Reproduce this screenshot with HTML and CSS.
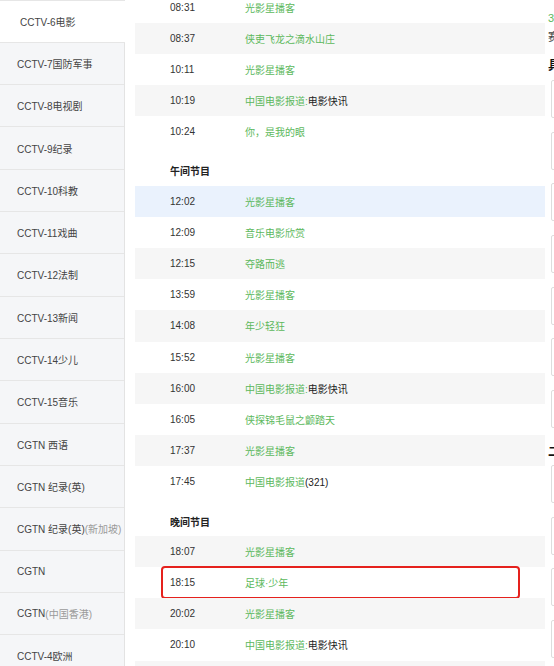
FILE: index.html
```html
<!DOCTYPE html>
<html lang="zh-CN">
<head>
<meta charset="utf-8">
<title>节目单</title>
<link rel="stylesheet" href="styles.css">
</head>
<body>
<div class="page">
  <ul class="channels">
    <li class="ch active">CCTV-6电影</li>
    <li class="ch">CCTV-7国防军事</li>
    <li class="ch">CCTV-8电视剧</li>
    <li class="ch">CCTV-9纪录</li>
    <li class="ch">CCTV-10科教</li>
    <li class="ch">CCTV-11戏曲</li>
    <li class="ch">CCTV-12法制</li>
    <li class="ch">CCTV-13新闻</li>
    <li class="ch">CCTV-14少儿</li>
    <li class="ch">CCTV-15音乐</li>
    <li class="ch">CGTN 西语</li>
    <li class="ch">CGTN 纪录(英)</li>
    <li class="ch">CGTN 纪录(英)<span class="sub">(新加坡)</span></li>
    <li class="ch">CGTN</li>
    <li class="ch">CGTN<span class="sub">(中国香港)</span></li>
    <li class="ch">CCTV-4欧洲</li>
  </ul>

  <div class="schedule">
    <div class="row"><span class="time">08:31</span><span class="title"><a>光影星播客</a></span></div>
    <div class="row alt"><span class="time">08:37</span><span class="title"><a>侠吏飞龙之滴水山庄</a></span></div>
    <div class="row"><span class="time">10:11</span><span class="title"><a>光影星播客</a></span></div>
    <div class="row alt"><span class="time">10:19</span><span class="title"><a>中国电影报道:</a>电影快讯</span></div>
    <div class="row"><span class="time">10:24</span><span class="title"><a>你，是我的眼</a></span></div>

    <div class="section">午间节目</div>
    <div class="row hover"><span class="time">12:02</span><span class="title"><a>光影星播客</a></span></div>
    <div class="row"><span class="time">12:09</span><span class="title"><a>音乐电影欣赏</a></span></div>
    <div class="row alt"><span class="time">12:15</span><span class="title"><a>夺路而逃</a></span></div>
    <div class="row"><span class="time">13:59</span><span class="title"><a>光影星播客</a></span></div>
    <div class="row alt"><span class="time">14:08</span><span class="title"><a>年少轻狂</a></span></div>
    <div class="row"><span class="time">15:52</span><span class="title"><a>光影星播客</a></span></div>
    <div class="row alt"><span class="time">16:00</span><span class="title"><a>中国电影报道:</a>电影快讯</span></div>
    <div class="row"><span class="time">16:05</span><span class="title"><a>侠探锦毛鼠之颤踏天</a></span></div>
    <div class="row alt"><span class="time">17:37</span><span class="title"><a>光影星播客</a></span></div>
    <div class="row"><span class="time">17:45</span><span class="title"><a>中国电影报道</a>(321)</span></div>

    <div class="section">晚间节目</div>
    <div class="row alt"><span class="time">18:07</span><span class="title"><a>光影星播客</a></span></div>
    <div class="row marked"><span class="time">18:15</span><span class="title"><a>足球·少年</a></span><span class="mark"></span></div>
    <div class="row alt"><span class="time">20:02</span><span class="title"><a>光影星播客</a></span></div>
    <div class="row"><span class="time">20:10</span><span class="title"><a>中国电影报道:</a>电影快讯</span></div>
    <div class="row alt"></div>
  </div>

  <div class="side">
    <div class="side-date">3月</div>
    <div class="side-note">赛事</div>
    <div class="side-head">具体</div>
    <div class="box"></div>
    <div class="box"></div>
    <div class="box"></div>
    <div class="box"></div>
    <div class="box"></div>
    <div class="box"></div>
    <div class="box"></div>
    <div class="side-head second">二</div>
    <div class="box"></div>
    <div class="box"></div>
    <div class="box"></div>
    <div class="box"></div>
  </div>
</div>
</body>
</html>
```

FILE: styles.css
```css
* { box-sizing: border-box; }

html, body {
  margin: 0;
  padding: 0;
  background: #ffffff;
  overflow: hidden;
}

body {
  width: 554px;
  height: 666px;
  font-family: "Liberation Sans", "Noto Sans CJK SC", sans-serif;
  font-size: 10px;
  color: #333333;
}

.page {
  display: flex;
  align-items: flex-start;
  width: 700px;
}

/* ---------- channel list ---------- */
.channels {
  list-style: none;
  margin: 0;
  padding: 0;
  width: 125px;
  flex: none;
  border-top: 1px solid #e6e6e6;
  border-right: 1px solid #e3e3e3;
}

.ch {
  height: 42.33px;
  display: flex;
  align-items: center;
  padding-left: 17px;
  background: #f5f6f8;
  border-bottom: 1px solid #e6e6e6;
  color: #444444;
  white-space: nowrap;
}

.ch.active {
  height: 41.7px;
  background: #ffffff;
  padding-left: 20px;
  margin-right: -1px;
}

.ch .sub {
  color: #9a9a9a;
}

/* ---------- schedule ---------- */
.schedule {
  width: 410px;
  flex: none;
  margin: -8.6px 0 0 10px;
}

.row {
  position: relative;
  height: 31.2px;
  display: flex;
  align-items: center;
}

.row.alt { background: #f6f6f6; }
.row.hover { background: #eaf2fd; }

.time {
  width: 110px;
  padding-left: 35px;
  flex: none;
  color: #333333;
}

.title {
  color: #222222;
  white-space: nowrap;
}

.title a {
  color: #5cb85c;
  text-decoration: none;
}

.section {
  height: 38.3px;
  padding: 16px 0 0 35px;
  font-weight: bold;
  color: #222222;
}

.mark {
  position: absolute;
  left: 26px;
  top: -1px;
  width: 359px;
  height: 33px;
  border: 2.6px solid #e5211d;
  border-radius: 4px;
}

/* ---------- right panel (cut off) ---------- */
.side {
  flex: none;
  width: 150px;
  margin-left: 3px;
  padding-top: 9px;
}

.side-date {
  color: #5cb85c;
  font-size: 11px;
  height: 13px;
}

.side-note {
  color: #444444;
  font-size: 11px;
  margin-top: 6px;
  height: 14px;
}

.side-head {
  font-weight: bold;
  font-size: 12px;
  color: #111111;
  margin-top: 14px;
  height: 14px;
  margin-bottom: 10px;
}

.side-head.second {
  margin-top: 4px;
  margin-bottom: 9px;
}

.box {
  margin-left: 3px;
  height: 38px;
  border: 1px solid #dddddd;
  border-radius: 2px;
  margin-bottom: 13.7px;
}
```
